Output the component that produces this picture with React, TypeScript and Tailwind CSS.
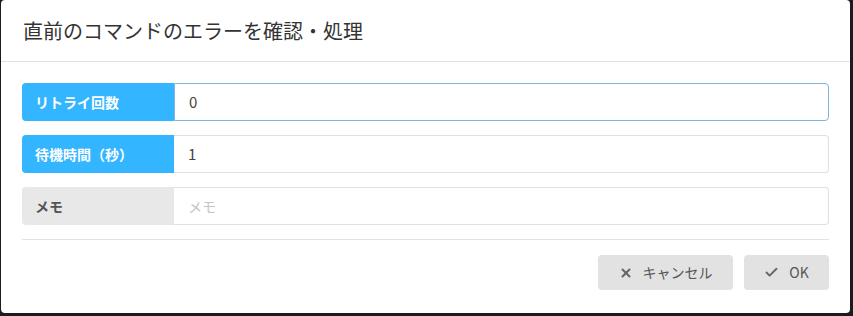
import { X, Check } from 'lucide-react';

const fields = [
  { label: 'リトライ回数', value: '0', active: true, focused: true },
  { label: '待機時間（秒）', value: '1', active: true, focused: false },
  { label: 'メモ', value: '', placeholder: 'メモ', active: false, focused: false },
];

export default function App() {
  return (
    <div
      className="h-[316px] w-[853px] bg-[#1c1c1c] pl-px pr-[3px] pb-[3px]"
      style={{ fontFamily: '"Noto Sans CJK JP", "Noto Sans", sans-serif' }}
    >
      <div className="flex h-full flex-col rounded-[4px] bg-white">
        {/* Header */}
        <div className="flex h-[62px] items-center border-b border-[#e2e2e2] px-[22px] pt-px">
          <h1 className="text-[20px] leading-none text-[#333]">直前のコマンドのエラーを確認・処理</h1>
        </div>

        {/* Body */}
        <div className="flex flex-col gap-[14px] px-[21px] pt-[21px]">
          {fields.map((f) => (
            <div key={f.label} className="flex h-[38px]">
              <div
                className={`flex w-[152px] shrink-0 items-center rounded-l-[4px] px-[13px] text-[14px] font-bold ${
                  f.active ? 'bg-[#33b5ff] text-white' : 'bg-[#e8e8e8] text-[#555]'
                }`}
              >
                {f.label}
              </div>
              <input
                readOnly
                value={f.value}
                placeholder={f.placeholder}
                className={`flex-1 rounded-r-[4px] border px-[14px] text-[15px] text-[#444] outline-none placeholder:text-[14px] placeholder:text-[#c4c4c4] ${
                  f.focused ? 'border-[#80b4dc]' : 'border-[#e0e0e0] border-l-0'
                }`}
                style={{ fontFamily: '"Noto Sans CJK JP", "Noto Sans", sans-serif' }}
              />
            </div>
          ))}
        </div>

        <div className="mx-[21px] mt-[14px] border-t border-[#e2e2e2]" />

        {/* Footer */}
        <div className="flex justify-end gap-[11px] px-[21px] pt-[15px]">
          <button className="flex h-[35px] w-[135px] items-center justify-center gap-[10px] rounded-[4px] bg-[#e2e2e2] text-[14px] text-[#555]">
            <X size={14} strokeWidth={3.5} className="text-[#666]" />
            キャンセル
          </button>
          <button className="flex h-[35px] w-[85px] items-center justify-center gap-[10px] rounded-[4px] bg-[#e2e2e2] text-[14px] text-[#555]">
            <Check size={15} strokeWidth={3} className="text-[#666]" />
            OK
          </button>
        </div>
      </div>
    </div>
  );
}
